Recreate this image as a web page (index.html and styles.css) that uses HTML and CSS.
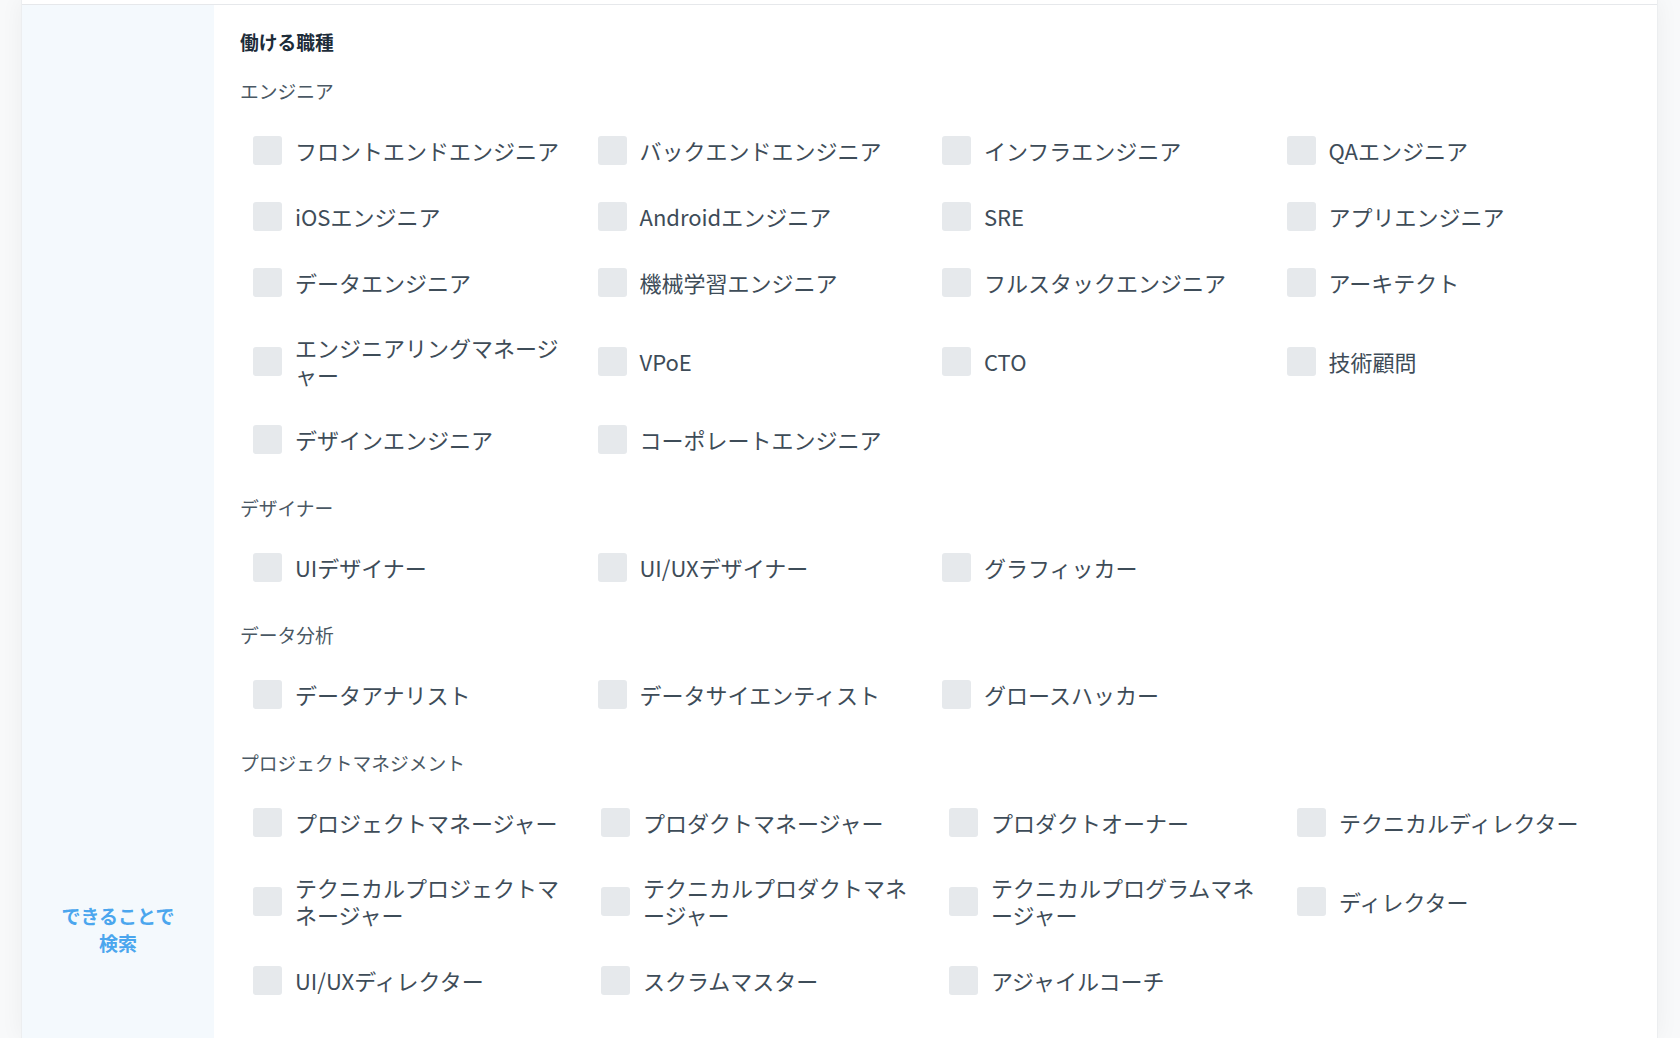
FILE: index.html
```html
<!DOCTYPE html>
<html lang="ja">
<head>
  <meta charset="UTF-8">
  <meta name="viewport" content="width=device-width, initial-scale=1.0">
  <link rel="stylesheet" href="styles.css">
  <title>できることで検索</title>
</head>
<body>
  <div class="card">
    <div class="row">
      <div class="side">
        <div class="side-label">できることで<br>検索</div>
      </div>
      <div class="content">
        <h3 class="title">働ける職種</h3>

        <div class="group">
          <div class="group-title">エンジニア</div>
          <div class="options">
            <label class="option"><input type="checkbox"><span>フロントエンドエンジニア</span></label>
            <label class="option"><input type="checkbox"><span>バックエンドエンジニア</span></label>
            <label class="option"><input type="checkbox"><span>インフラエンジニア</span></label>
            <label class="option"><input type="checkbox"><span>QAエンジニア</span></label>
            <label class="option"><input type="checkbox"><span>iOSエンジニア</span></label>
            <label class="option"><input type="checkbox"><span>Androidエンジニア</span></label>
            <label class="option"><input type="checkbox"><span>SRE</span></label>
            <label class="option"><input type="checkbox"><span>アプリエンジニア</span></label>
            <label class="option"><input type="checkbox"><span>データエンジニア</span></label>
            <label class="option"><input type="checkbox"><span>機械学習エンジニア</span></label>
            <label class="option"><input type="checkbox"><span>フルスタックエンジニア</span></label>
            <label class="option"><input type="checkbox"><span>アーキテクト</span></label>
            <label class="option"><input type="checkbox"><span>エンジニアリングマネージャー</span></label>
            <label class="option"><input type="checkbox"><span>VPoE</span></label>
            <label class="option"><input type="checkbox"><span>CTO</span></label>
            <label class="option"><input type="checkbox"><span>技術顧問</span></label>
            <label class="option"><input type="checkbox"><span>デザインエンジニア</span></label>
            <label class="option"><input type="checkbox"><span>コーポレートエンジニア</span></label>
          </div>
        </div>

        <div class="group">
          <div class="group-title">デザイナー</div>
          <div class="options">
            <label class="option"><input type="checkbox"><span>UIデザイナー</span></label>
            <label class="option"><input type="checkbox"><span>UI/UXデザイナー</span></label>
            <label class="option"><input type="checkbox"><span>グラフィッカー</span></label>
          </div>
        </div>

        <div class="group">
          <div class="group-title">データ分析</div>
          <div class="options">
            <label class="option"><input type="checkbox"><span>データアナリスト</span></label>
            <label class="option"><input type="checkbox"><span>データサイエンティスト</span></label>
            <label class="option"><input type="checkbox"><span>グロースハッカー</span></label>
          </div>
        </div>

        <div class="group">
          <div class="group-title">プロジェクトマネジメント</div>
          <div class="options options--wide">
            <label class="option"><input type="checkbox"><span>プロジェクトマネージャー</span></label>
            <label class="option"><input type="checkbox"><span>プロダクトマネージャー</span></label>
            <label class="option"><input type="checkbox"><span>プロダクトオーナー</span></label>
            <label class="option"><input type="checkbox"><span>テクニカルディレクター</span></label>
            <label class="option"><input type="checkbox"><span>テクニカルプロジェクトマネージャー</span></label>
            <label class="option"><input type="checkbox"><span>テクニカルプロダクトマネージャー</span></label>
            <label class="option"><input type="checkbox"><span>テクニカルプログラムマネージャー</span></label>
            <label class="option"><input type="checkbox"><span>ディレクター</span></label>
            <label class="option"><input type="checkbox"><span>UI/UXディレクター</span></label>
            <label class="option"><input type="checkbox"><span>スクラムマスター</span></label>
            <label class="option"><input type="checkbox"><span>アジャイルコーチ</span></label>
          </div>
        </div>
      </div>
    </div>
  </div>
</body>
</html>
```

FILE: styles.css
```css
body {
  margin: 0;
  background-color: #f8f9fa;
  font-family: "Noto Sans CJK JP", "Noto Sans", sans-serif;
  color: #3e4c58;
}

.card {
  display: flex;
  flex-direction: column;
  box-sizing: border-box;
  min-height: 100vh;
  margin: 0 22px 0 21px;
  padding-top: 4px;
  background-color: #fff;
  border-left: 1px solid #eceef0;
  border-right: 1px solid #eceef0;
  box-shadow: 0 0 22px rgba(0, 0, 0, 0.05);
}

.row {
  flex: 1;
  display: grid;
  grid-template-columns: 192px 1fr;
  border-top: 1px solid #e6e8eb;
}

.side {
  display: flex;
  flex-direction: column;
  justify-content: flex-end;
  align-items: center;
  padding-bottom: 82px;
  background-color: #f4f9fd;
}

.side-label {
  font-size: 19px;
  font-weight: bold;
  line-height: 27px;
  color: #4ba6ee;
  text-align: center;
}

.content {
  padding: 23px 0 30px 26px;
}

.title {
  margin: 0 0 22px;
  font-size: 18.75px;
  font-weight: bold;
  line-height: 27px;
  color: #1d2c39;
}

.group + .group {
  margin-top: 39.5px;
}

.group-title {
  font-size: 18.75px;
  line-height: 27px;
  color: #4a5864;
}

.options {
  display: grid;
  grid-template-columns: repeat(4, 344.5px);
  row-gap: 37px;
  margin-top: 32px;
  padding-left: 13px;
}

.options--wide {
  grid-template-columns: repeat(4, 348px);
  row-gap: 37.5px;
}

.option {
  display: flex;
  align-items: center;
  gap: 13px;
  padding-right: 28px;
  font-size: 22px;
  line-height: 27px;
  cursor: pointer;
}

.option input {
  appearance: none;
  flex: none;
  width: 29px;
  height: 29px;
  margin: 0;
  border-radius: 3px;
  background-color: #e6e9ec;
  cursor: pointer;
}

.option input:checked {
  background-color: #4ba6ee;
}
```
